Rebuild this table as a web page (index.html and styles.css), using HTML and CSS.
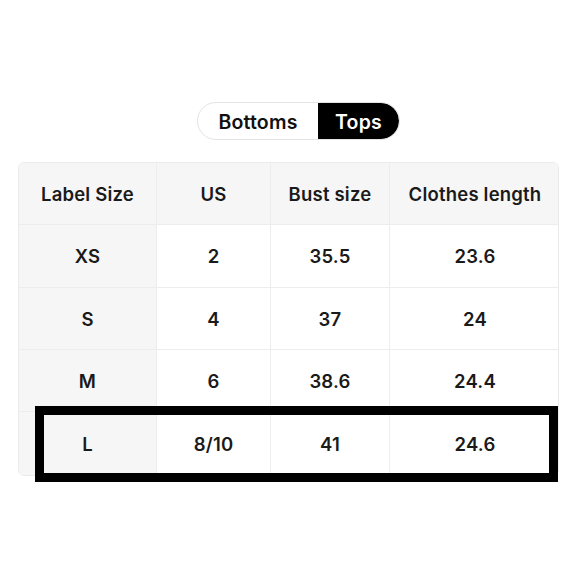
FILE: index.html
```html
<!DOCTYPE html>
<html>
<head>
<meta charset="utf-8">
<link rel="stylesheet" href="styles.css">
</head>
<body>
<div class="page">
  <div class="toggle">
    <span class="seg">Bottoms</span>
    <span class="seg active">Tops</span>
  </div>
  <div class="table-wrap">
    <div class="table">
      <div class="cell head first">Label Size</div>
      <div class="cell head">US</div>
      <div class="cell head">Bust size</div>
      <div class="cell head last">Clothes length</div>

      <div class="cell side">XS</div>
      <div class="cell">2</div>
      <div class="cell">35.5</div>
      <div class="cell last">23.6</div>

      <div class="cell side">S</div>
      <div class="cell">4</div>
      <div class="cell">37</div>
      <div class="cell last">24</div>

      <div class="cell side">M</div>
      <div class="cell">6</div>
      <div class="cell">38.6</div>
      <div class="cell last">24.4</div>

      <div class="cell side bottom">L</div>
      <div class="cell bottom">8/10</div>
      <div class="cell bottom">41</div>
      <div class="cell last bottom">24.6</div>
    </div>
    <div class="highlight"></div>
  </div>
</div>
</body>
</html>
```
FILE: styles.css
```css
* { box-sizing: border-box; }
html, body { margin: 0; padding: 0; background: #fff; }
body {
  font-family: Inter, "Noto Sans", "Liberation Sans", sans-serif;
  color: #151515;
}
.page {
  width: 580px;
  height: 580px;
  padding-top: 102px;
}
.toggle {
  display: flex;
  width: 203px;
  height: 38px;
  margin-left: 197px;
  border: 1px solid #e4e4e4;
  border-radius: 19px;
  overflow: hidden;
  background: #fff;
}
.seg {
  display: flex;
  align-items: center;
  justify-content: center;
  padding-top: 1px;
  font-size: 19.5px;
  font-weight: 600;
  letter-spacing: 0.2px;
  color: #111;
}
.seg:first-child { width: 120px; }
.seg.active {
  flex: 1;
  background: #000;
  color: #fff;
  border-radius: 0 19px 19px 0;
}
.table-wrap {
  position: relative;
  margin-top: 22px;
  margin-left: 18px;
  width: 541px;
}
.table {
  display: grid;
  grid-template-columns: 138px 114px 119px 170px;
  grid-template-rows: 62px 63px 62px 62px 63px;
  border: 1px solid #ebebeb;
  border-radius: 6px;
  overflow: hidden;
}
.cell {
  display: flex;
  align-items: center;
  justify-content: center;
  font-size: 18.5px;
  font-weight: 600;
  letter-spacing: 0.2px;
  color: #1a1a1a;
  border-right: 1px solid #ededed;
  border-bottom: 1px solid #ededed;
  background: #fff;
}
.cell.last { border-right: none; }
.cell.bottom { border-bottom: none; }
.cell.head { background: #f6f6f6; }
.cell.side { background: #f6f6f6; }
.highlight {
  position: absolute;
  left: 17px;
  top: 244px;
  width: 523px;
  height: 76px;
  border: 9px solid #000;
}
```
